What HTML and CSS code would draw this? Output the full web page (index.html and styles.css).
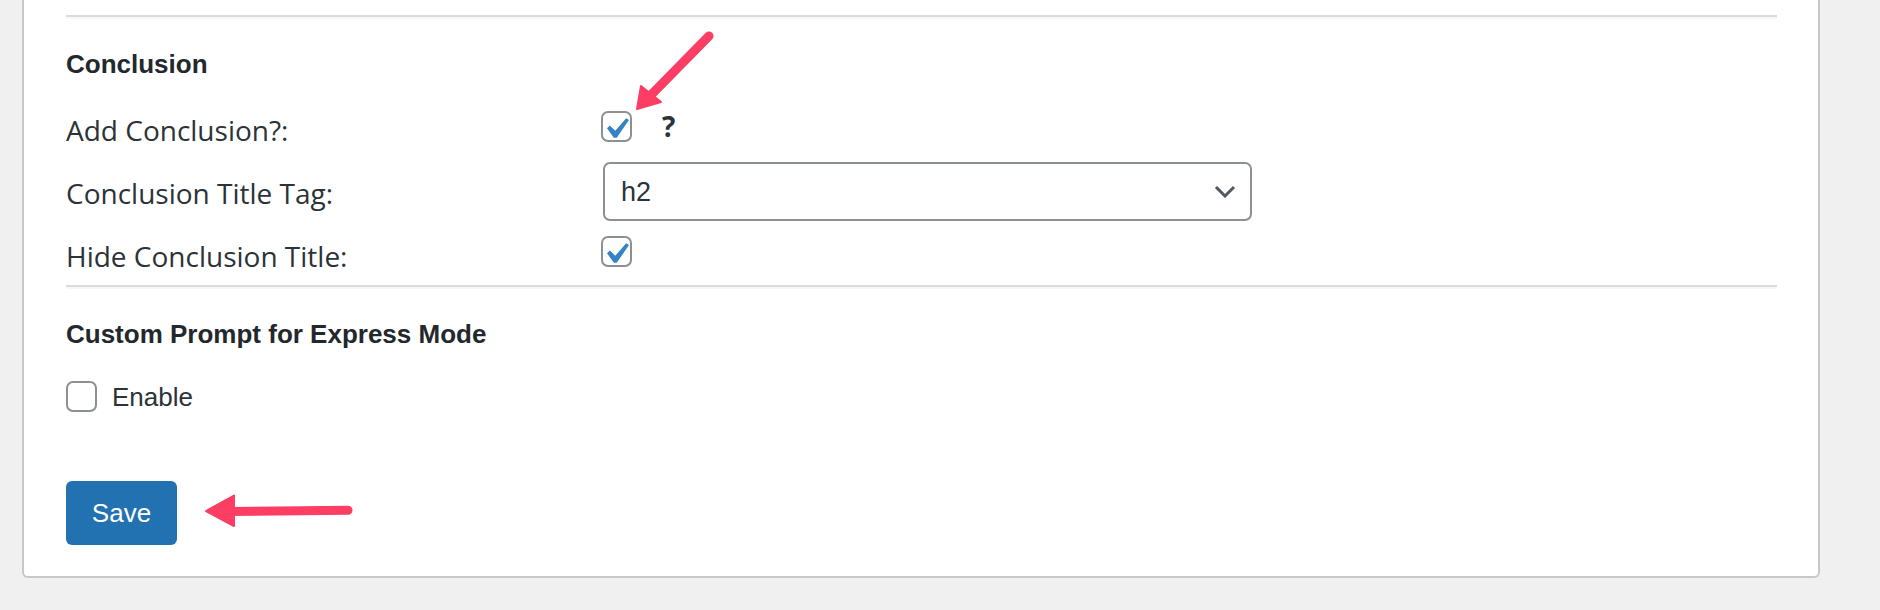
FILE: index.html
```html
<!DOCTYPE html>
<html lang="en">
<head>
<meta charset="utf-8">
<title>Settings</title>
<link rel="stylesheet" href="styles.css">
</head>
<body>
<div class="page">
  <div class="card">
    <hr class="sep">
    <h3 class="section-title">Conclusion</h3>

    <div class="field field-1">
      <label class="field-label">Add Conclusion?:</label>
      <div class="field-control">
        <span class="cb is-checked"><svg class="tick" viewBox="5.78 4.89 10.39 9.32" width="22" height="20"><path d="M14.83 4.89l1.34.94-5.81 8.38H9.02L5.78 9.67l1.34-1.25 2.57 2.4z"/></svg></span>
        <span class="help">?</span>
      </div>
    </div>

    <div class="field field-2">
      <label class="field-label">Conclusion Title Tag:</label>
      <div class="field-control">
        <div class="select">
          <span class="select-value">h2</span>
          <svg class="chev" viewBox="0 0 22 13" width="22" height="13"><polyline points="2,2 11,11 20,2"/></svg>
        </div>
      </div>
    </div>

    <div class="field field-3">
      <label class="field-label">Hide Conclusion Title:</label>
      <div class="field-control">
        <span class="cb is-checked"><svg class="tick" viewBox="5.78 4.89 10.39 9.32" width="22" height="20"><path d="M14.83 4.89l1.34.94-5.81 8.38H9.02L5.78 9.67l1.34-1.25 2.57 2.4z"/></svg></span>
      </div>
    </div>

    <hr class="sep sep-2">
    <h3 class="section-title">Custom Prompt for Express Mode</h3>

    <div class="enable-row">
      <span class="cb"></span>
      <span class="enable-text">Enable</span>
    </div>

    <button class="save-btn" type="button">Save</button>
  </div>

  <svg class="annotations" width="1880" height="610" viewBox="0 0 1880 610">
    <line x1="709" y1="36" x2="650" y2="96" />
    <polygon points="637,109 641,86 661,102" />
    <line x1="348" y1="510.3" x2="230" y2="511.5" />
    <polygon points="206,511 234,495.5 234,526" />
  </svg>
</div>
</body>
</html>
```

FILE: styles.css
```css
html, body {
  margin: 0;
  padding: 0;
}

body {
  background: #f0f0f1;
  width: 1880px;
  height: 610px;
  overflow: hidden;
  font-family: "Liberation Sans", Arial, sans-serif;
  color: #2c3338;
}

.page {
  position: relative;
  height: 610px;
  padding-left: 22px;
}

.card {
  width: 1798px;
  box-sizing: border-box;
  background: #fff;
  border: 2px solid #c8c8ca;
  border-top: 0;
  border-radius: 0 0 6px 6px;
  padding: 15px 41px 31px 42px;
}

.sep {
  margin: 0;
  height: 0;
  border: 0;
  border-top: 2px solid #dcdcde;
  border-bottom: 2px solid #f6f7f7;
}

.sep-2 {
  margin-top: 9px;
}

.section-title {
  margin: 30px 0 0;
  font-family: "Liberation Sans", Arial, sans-serif;
  font-weight: 700;
  font-size: 26px;
  line-height: 30px;
  color: #23282d;
}

.field {
  display: flex;
  align-items: flex-start;
}

.field-label {
  flex: none;
  width: 535px;
  font-family: "Open Sans", sans-serif;
  font-size: 28px;
  line-height: 40px;
  color: #2c3338;
}

.field-control {
  display: flex;
  align-items: center;
}

.field-1 {
  margin-top: 31px;
}

.field-1 .field-control {
  margin-top: 1px;
}

.field-2 {
  margin-top: 12px;
  align-items: center;
}

.field-2 .field-label {
  padding-top: 2px;
}

.field-3 {
  margin-top: 15px;
}

.cb {
  flex: none;
  display: inline-flex;
  align-items: center;
  justify-content: center;
  width: 31px;
  height: 31px;
  box-sizing: border-box;
  border: 2px solid #8c8f94;
  border-radius: 7px;
  background: #fff;
}

.tick {
  display: block;
  margin: 3px 0 0 3px;
  fill: #3582c4;
}

.help {
  margin-left: 30px;
  font-family: "Open Sans", sans-serif;
  font-weight: 700;
  font-size: 28px;
  line-height: 31px;
  color: #2c3338;
}

.select {
  margin-left: 2px;
  width: 649px;
  height: 59px;
  box-sizing: border-box;
  border: 2px solid #8c8f94;
  border-radius: 7px;
  display: flex;
  align-items: center;
  justify-content: space-between;
  padding: 0 14px 0 16px;
  background: #fff;
}

.select-value {
  font-family: "Liberation Sans", Arial, sans-serif;
  font-size: 27px;
  line-height: 30px;
  color: #2c3338;
  padding-top: 1px;
}

.chev {
  display: block;
  fill: none;
  stroke: #50575e;
  stroke-width: 3;
}

.enable-row {
  margin-top: 32px;
  display: flex;
  align-items: flex-start;
  height: 31px;
}

.enable-text {
  margin-left: 15px;
  margin-top: 2px;
  font-family: "Liberation Sans", Arial, sans-serif;
  font-size: 26px;
  line-height: 29px;
  color: #2c3338;
}

.save-btn {
  display: block;
  margin-top: 69px;
  width: 111px;
  height: 64px;
  padding: 0;
  border: 0;
  border-radius: 6px;
  background: #2271b1;
  color: #fff;
  font-family: "Liberation Sans", Arial, sans-serif;
  font-size: 26px;
  line-height: 62px;
}

.annotations {
  position: absolute;
  left: 0;
  top: 0;
  pointer-events: none;
}

.annotations line {
  stroke: #fc3d64;
  stroke-width: 9;
  stroke-linecap: round;
}

.annotations polygon {
  fill: #fc3d64;
  stroke: #fc3d64;
  stroke-width: 2;
  stroke-linejoin: round;
}
```
